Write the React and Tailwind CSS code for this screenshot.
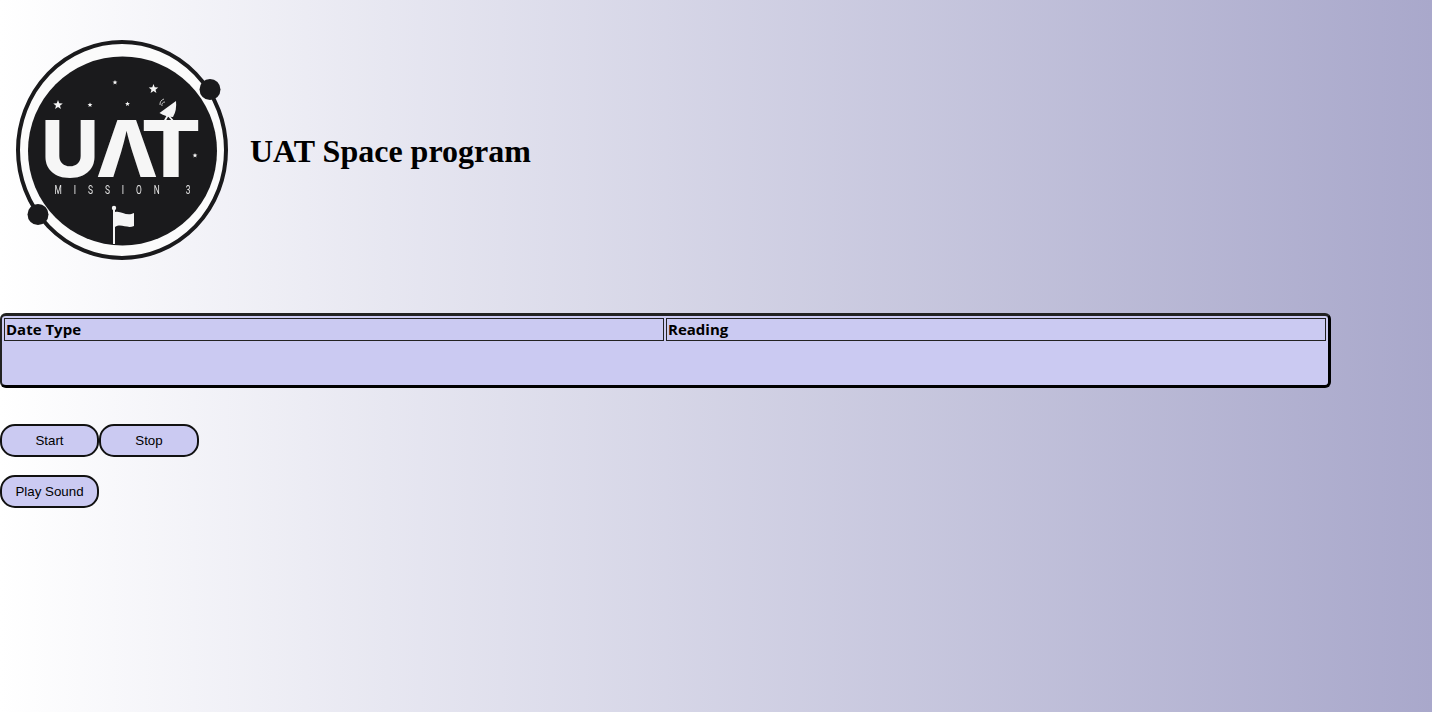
import React from 'react';

const Star = ({ x, y, r }) => {
  const pts = [];
  for (let i = 0; i < 10; i++) {
    const rad = i % 2 === 0 ? r : r * 0.42;
    const a = -Math.PI / 2 + (i * Math.PI) / 5;
    pts.push(`${x + rad * Math.cos(a)},${y + rad * Math.sin(a)}`);
  }
  return <polygon points={pts.join(' ')} fill="#f5f5f5" />;
};

const Logo = () => (
  <svg width="240" height="240" viewBox="0 0 240 240" className="shrink-0 blur-[0.3px]">
    <ellipse cx="122" cy="120" rx="104" ry="108" fill="#fbfbfb" stroke="#1a1a1c" strokeWidth="4" />
    <circle cx="122.5" cy="121" r="94.5" fill="#1a1a1c" />
    <circle cx="210" cy="59.5" r="10.5" fill="#1a1a1c" />
    <circle cx="38" cy="184.5" r="10.5" fill="#1a1a1c" />

    <Star x={153.5} y={59} r={5} />
    <Star x={58} y={75} r={5} />
    <Star x={115} y={52.5} r={2.6} />
    <Star x={90} y={75} r={2.6} />
    <Star x={127.5} y={74} r={2.6} />
    <Star x={195} y={125.5} r={2.6} />

    {/* satellite dish */}
    <path d="M159.5 83 L176 71 Q177 80 173 87 Q166 87 159.5 83 Z" fill="#f5f5f5" />
    <path d="M168 85 L164 92 M168 85 L174 92" stroke="#f5f5f5" strokeWidth="1.8" fill="none" />
    <path d="M164 69 A6 6 0 0 0 160 75 M165 72 A3 3 0 0 0 162 76" stroke="#d8d8d8" strokeWidth="0.9" fill="none" />

    <g fill="#f6f6f6" fontFamily="Inter, sans-serif" fontWeight="800">
      <text x="41" y="147" fontSize="78" textLength="58" lengthAdjust="spacingAndGlyphs">U</text>
      <text x="96" y="147" fontSize="78" textLength="62" lengthAdjust="spacingAndGlyphs">Λ</text>
      <text x="141" y="147" fontSize="78" textLength="60" lengthAdjust="spacingAndGlyphs">T</text>
    </g>
    <text
      transform="scale(0.7 1)"
      x="78"
      y="164"
      fill="#e4e4e4"
      fontFamily="Roboto, sans-serif"
      fontSize="12"
      textLength="194"
      lengthAdjust="spacing"
    >
      MISSION 3
    </text>

    {/* flag */}
    <circle cx="114" cy="178" r="2.2" fill="#f5f5f5" />
    <rect x="113" y="178" width="2" height="36" fill="#f5f5f5" />
    <path d="M115 182 C121 180 126 187 134 183 L134 196 C127 199 121 193 115 197 Z" fill="#f5f5f5" />
  </svg>
);

export default function App() {
  return (
    <div className="min-h-screen bg-gradient-to-r from-white to-[#a9a8cb] pt-[30px]">
      <header className="flex items-center">
        <Logo />
        <h1 className="ml-[10px] mt-[2px] text-[32px] font-bold text-black font-['Liberation_Serif',serif]">UAT Space program</h1>
      </header>

      <table className="mt-[43px] block w-[1331px] h-[75px] rounded-[6px] border-[3px] border-l-2 border-black border-t-[#222] border-l-[#222] border-separate border-spacing-[2px] bg-[#cbcaf2] font-['Open_Sans',sans-serif]">
        <thead>
          <tr>
            <th className="w-[660px] h-[23px] border border-[#222] px-[1px] py-0 text-left text-[15px] leading-[21px] font-bold text-black">Date Type</th>
            <th className="w-[660px] h-[23px] border border-[#222] px-[1px] py-0 text-left text-[15px] leading-[21px] font-bold text-black">Reading</th>
          </tr>
        </thead>
      </table>

      <div className="mt-[36px] flex font-['Liberation_Sans',sans-serif]">
        <button className="h-[33px] w-[99px] rounded-[15px] border-2 border-[#111] bg-[#cbcaf2] text-[13.33px] text-black">Start</button>
        <button className="h-[33px] w-[100px] rounded-[15px] border-2 border-[#111] bg-[#cbcaf2] text-[13.33px] text-black">Stop</button>
      </div>
      <div className="mt-[18px] flex font-['Liberation_Sans',sans-serif]">
        <button className="h-[33px] w-[99px] rounded-[15px] border-2 border-[#111] bg-[#cbcaf2] text-[13.33px] text-black">Play Sound</button>
      </div>
    </div>
  );
}
